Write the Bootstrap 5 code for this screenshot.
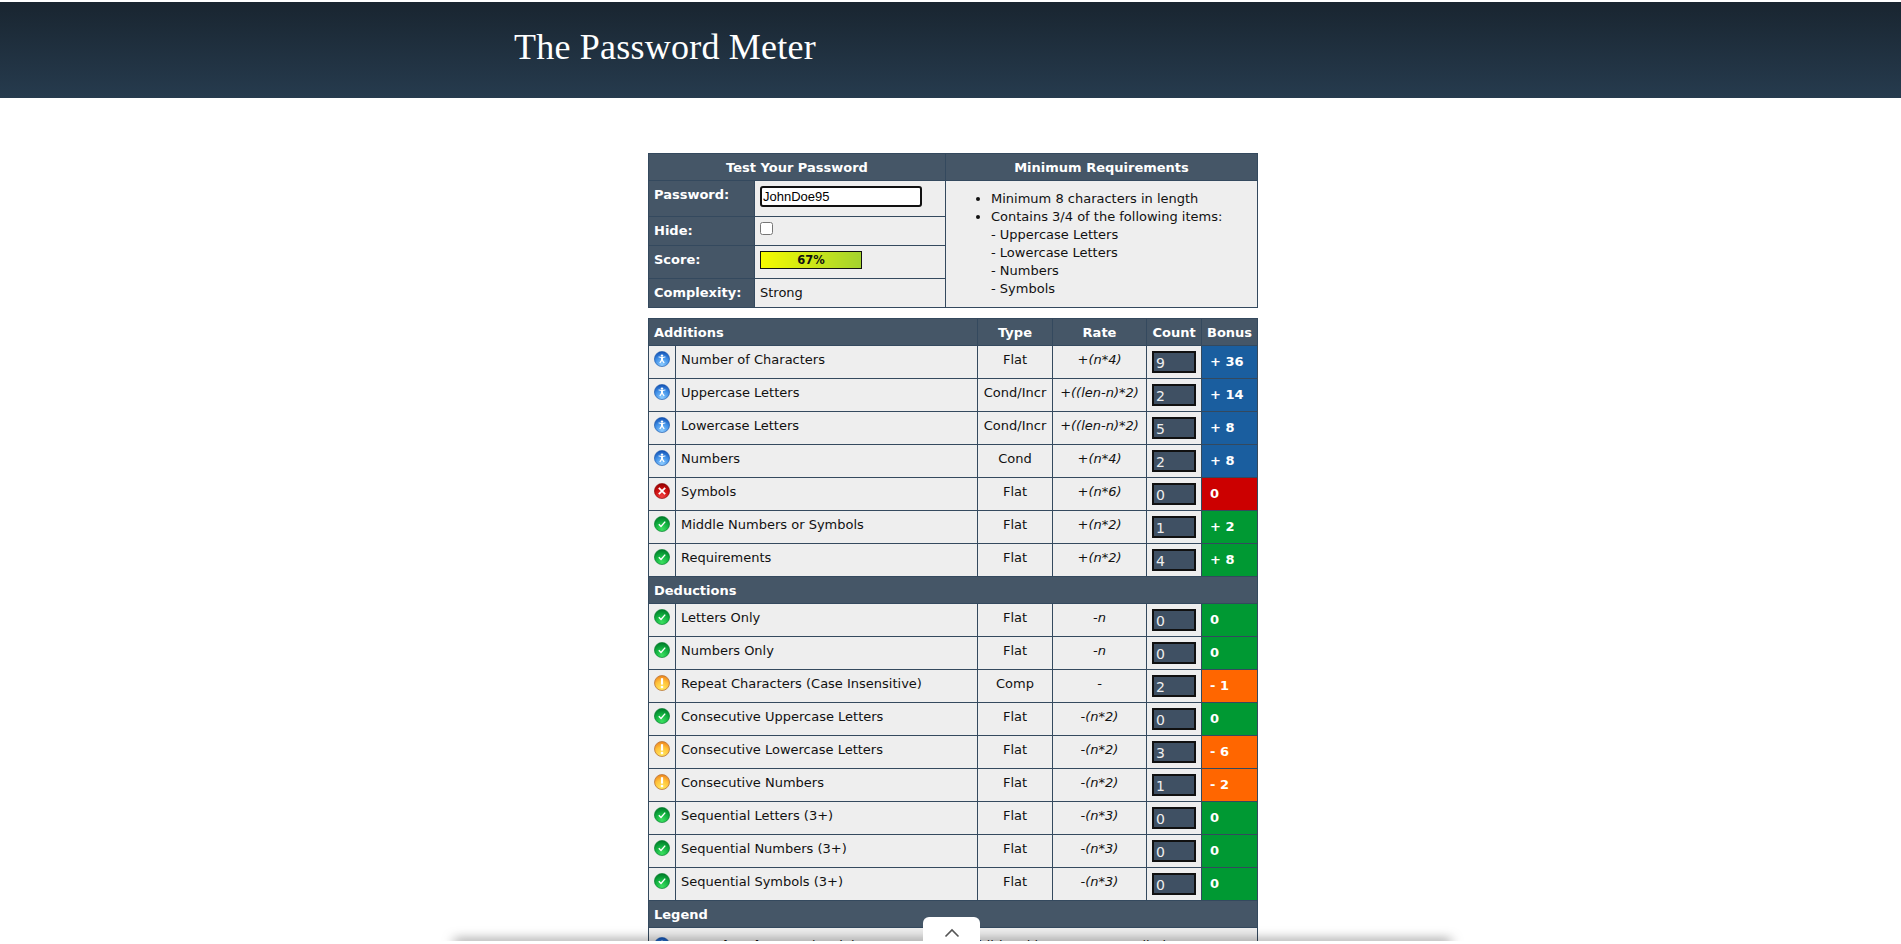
<!DOCTYPE html>
<html>
<head>
  <meta charset="UTF-8">
  <title>The Password Meter</title>
  <link href="https://cdn.jsdelivr.net/npm/bootstrap@5.3.2/dist/css/bootstrap.min.css" rel="stylesheet">
  <style>
    html, body { height: 944px; overflow: hidden; }
    body { background: #fff; font-family: "DejaVu Sans", Verdana, sans-serif; font-size: 13px; line-height: 18px; color: #111; }
    .site-head { margin-top: 2px; height: 96px; background: linear-gradient(#192530, #263b4e); padding: 24px 0 0 514px; }
    .site-head h1 { font-family: "Liberation Serif", serif; font-size: 36px; line-height: 42px; letter-spacing: .22px; color: #fff; margin: 0; font-weight: 400; }
    .meter-wrap { width: 610px; margin: 55px 0 0 648px; }
    .meter-tbl { width: 610px; table-layout: fixed; border-collapse: collapse; background: #eee; }
    .meter-tbl td, .meter-tbl th { border: 1px solid #34495e; padding: 0 5px; vertical-align: top; }
    .meter-tbl th, .meter-tbl td.lbl { background: #455667; color: #fff; font-weight: 700; }
    .meter-tbl thead th { height: 27px; padding-top: 5px; text-align: center; white-space: nowrap; }
    .meter-tbl thead th.first { text-align: left; }
    .top-tbl { margin-bottom: 10px; }
    .top-tbl .r1 td { height: 36px; padding-top: 5px; }
    .top-tbl .r2 td { height: 29px; padding-top: 5px; }
    .top-tbl .r3 td { height: 33px; padding-top: 5px; }
    .top-tbl .r4 td { height: 29px; padding-top: 5px; }
    .pass-input { width: 162px; height: 21px; border: 2px solid #111; border-radius: 3px; padding: 0 1px; font: 13px "Liberation Sans", Arial, sans-serif; background: #fff; color: #000; display: block; outline: none; }
    .hide-box { width: 13px; height: 13px; display: block; margin-top: 0; }
    .score-bar { width: 102px; height: 18px; border: 1px solid #111; background: linear-gradient(90deg, #f6fb00, #a4d32e); text-align: center; font-weight: 700; font-size: 11.5px; line-height: 16px; color: #111; }
    .req-cell { padding: 9px 5px 0 !important; }
    .req-cell ul { margin: 0; padding: 0 0 0 40px; }
    .req-cell .sub { list-style: none; }
    .rows { white-space: nowrap; }
    .rows td { height: 33px; padding-top: 5px; }
    .rows td.ico { padding: 5px 0 0 5px; }
    .rows td.ico svg { display: block; }
    .rows td.ctr { text-align: center; padding-left: 0; padding-right: 0; }
    .rows td.cnt { padding: 5px 5px 0; }
    .cnt-box { width: 44px; height: 22px; border: 2px solid #111; background: #3f5063; color: #eee; padding: 1px 0 0 2px; font-size: 14px; line-height: 18px; }
    .rows td.bonus { color: #fff; font-weight: 700; padding: 7px 0 0 8px; }
    .bg-blue { background: #1a5e9f; }
    .bg-grn { background: #009933; }
    .bg-red { background: #cc0000; }
    .bg-org { background: #ff6600; }
    .sub-head td { height: 27px !important; padding-top: 5px !important; }
    .legend-row td { padding-top: 9px; }
    .legend-row svg { vertical-align: top; margin-right: 4px; }
    .bottom-bar { position: absolute; left: 454px; width: 997px; top: 941px; height: 6px; box-shadow: 0 -1px 12px rgba(0,0,0,.55); }
    .bottom-fill { position: absolute; left: 0; right: 0; top: 941px; height: 3px; background: #fff; }
    .top-btn { position: absolute; left: 923px; top: 917px; width: 57px; height: 27px; background: #fff; border-radius: 6px 6px 0 0; }
    .top-btn svg { display: block; margin: 11px auto 0; }
  </style>
</head>
<body>
  <svg width="0" height="0" class="d-block">
    <defs>
      <radialGradient id="gb" cx=".5" cy=".85" r=".8"><stop offset="0" stop-color="#8ccbff"/><stop offset=".6" stop-color="#3f8fe6"/><stop offset="1" stop-color="#1555b8"/></radialGradient>
      <radialGradient id="gg" cx=".5" cy=".85" r=".8"><stop offset="0" stop-color="#3be060"/><stop offset=".6" stop-color="#10ad3e"/><stop offset="1" stop-color="#007f2a"/></radialGradient>
      <radialGradient id="gr" cx=".5" cy=".85" r=".8"><stop offset="0" stop-color="#f04040"/><stop offset=".6" stop-color="#cc1010"/><stop offset="1" stop-color="#980000"/></radialGradient>
      <radialGradient id="go" cx=".5" cy=".85" r=".8"><stop offset="0" stop-color="#ffe860"/><stop offset=".6" stop-color="#ffc23a"/><stop offset="1" stop-color="#f08a20"/></radialGradient>
      <symbol id="i-star" viewBox="0 0 16 16">
        <circle cx="8" cy="8" r="7.6" fill="url(#gb)" stroke="#1a55a8" stroke-width=".6"/>
        <circle cx="8" cy="4.6" r="1.2" fill="#fff"/>
        <path d="M4.4 6.3L7 7v2l-1.7 2.8 1 .5L8 10l1.7 2.3 1-.5L9 9V7l2.6-.7-.3-.9L8 6.1l-3.3-.7z" fill="#fff"/>
      </symbol>
      <symbol id="i-ok" viewBox="0 0 16 16">
        <circle cx="8" cy="8" r="7.6" fill="url(#gg)" stroke="#007a28" stroke-width=".6"/>
        <path d="M4.8 8.2l2.2 2.2 4.2-4.8" stroke="#fff" stroke-width="1.4" fill="none"/>
      </symbol>
      <symbol id="i-bad" viewBox="0 0 16 16">
        <circle cx="8" cy="8" r="7.6" fill="url(#gr)" stroke="#800" stroke-width=".6"/>
        <path d="M4.8 4.8l6.4 6.4M11.2 4.8l-6.4 6.4" stroke="#fff" stroke-width="1.8" fill="none"/>
      </symbol>
      <symbol id="i-warn" viewBox="0 0 16 16">
        <circle cx="8" cy="8" r="7.5" fill="url(#go)" stroke="#b8763a" stroke-width=".8"/>
        <path d="M8 3.2v6.4" stroke="#fff" stroke-width="2.2" fill="none"/>
        <circle cx="8" cy="12" r="1.3" fill="#fff"/>
      </symbol>
    </defs>
  </svg>

  <header class="site-head"><h1>The Password Meter</h1></header>

  <main class="meter-wrap">
    <table class="meter-tbl top-tbl">
      <colgroup><col style="width:106px"><col style="width:191px"><col></colgroup>
      <thead><tr><th colspan="2">Test Your Password</th><th>Minimum Requirements</th></tr></thead>
      <tbody>
        <tr class="r1">
          <td class="lbl">Password:</td>
          <td><input class="pass-input" type="text" value="JohnDoe95"></td>
          <td rowspan="4" class="req-cell">
            <ul>
              <li>Minimum 8 characters in length</li>
              <li>Contains 3/4 of the following items:</li>
              <li class="sub">- Uppercase Letters</li>
              <li class="sub">- Lowercase Letters</li>
              <li class="sub">- Numbers</li>
              <li class="sub">- Symbols</li>
            </ul>
          </td>
        </tr>
        <tr class="r2"><td class="lbl">Hide:</td><td><input class="hide-box" type="checkbox"></td></tr>
        <tr class="r3"><td class="lbl">Score:</td><td><div class="score-bar">67%</div></td></tr>
        <tr class="r4"><td class="lbl">Complexity:</td><td>Strong</td></tr>
      </tbody>
    </table>

    <table class="meter-tbl rows">
      <colgroup><col style="width:27px"><col style="width:302px"><col style="width:75px"><col style="width:94px"><col style="width:55px"><col></colgroup>
      <thead><tr><th colspan="2" class="first">Additions</th><th>Type</th><th>Rate</th><th>Count</th><th>Bonus</th></tr></thead>
      <tbody>
        <tr><td class="ico"><svg width="16" height="16"><use href="#i-star"/></svg></td><td>Number of Characters</td><td class="ctr">Flat</td><td class="ctr"><i>+(n*4)</i></td><td class="cnt"><div class="cnt-box">9</div></td><td class="bonus bg-blue">+ 36</td></tr>
        <tr><td class="ico"><svg width="16" height="16"><use href="#i-star"/></svg></td><td>Uppercase Letters</td><td class="ctr">Cond/Incr</td><td class="ctr"><i>+((len-n)*2)</i></td><td class="cnt"><div class="cnt-box">2</div></td><td class="bonus bg-blue">+ 14</td></tr>
        <tr><td class="ico"><svg width="16" height="16"><use href="#i-star"/></svg></td><td>Lowercase Letters</td><td class="ctr">Cond/Incr</td><td class="ctr"><i>+((len-n)*2)</i></td><td class="cnt"><div class="cnt-box">5</div></td><td class="bonus bg-blue">+ 8</td></tr>
        <tr><td class="ico"><svg width="16" height="16"><use href="#i-star"/></svg></td><td>Numbers</td><td class="ctr">Cond</td><td class="ctr"><i>+(n*4)</i></td><td class="cnt"><div class="cnt-box">2</div></td><td class="bonus bg-blue">+ 8</td></tr>
        <tr><td class="ico"><svg width="16" height="16"><use href="#i-bad"/></svg></td><td>Symbols</td><td class="ctr">Flat</td><td class="ctr"><i>+(n*6)</i></td><td class="cnt"><div class="cnt-box">0</div></td><td class="bonus bg-red">0</td></tr>
        <tr><td class="ico"><svg width="16" height="16"><use href="#i-ok"/></svg></td><td>Middle Numbers or Symbols</td><td class="ctr">Flat</td><td class="ctr"><i>+(n*2)</i></td><td class="cnt"><div class="cnt-box">1</div></td><td class="bonus bg-grn">+ 2</td></tr>
        <tr><td class="ico"><svg width="16" height="16"><use href="#i-ok"/></svg></td><td>Requirements</td><td class="ctr">Flat</td><td class="ctr"><i>+(n*2)</i></td><td class="cnt"><div class="cnt-box">4</div></td><td class="bonus bg-grn">+ 8</td></tr>
        <tr class="sub-head"><td colspan="6" class="lbl">Deductions</td></tr>
        <tr><td class="ico"><svg width="16" height="16"><use href="#i-ok"/></svg></td><td>Letters Only</td><td class="ctr">Flat</td><td class="ctr"><i>-n</i></td><td class="cnt"><div class="cnt-box">0</div></td><td class="bonus bg-grn">0</td></tr>
        <tr><td class="ico"><svg width="16" height="16"><use href="#i-ok"/></svg></td><td>Numbers Only</td><td class="ctr">Flat</td><td class="ctr"><i>-n</i></td><td class="cnt"><div class="cnt-box">0</div></td><td class="bonus bg-grn">0</td></tr>
        <tr><td class="ico"><svg width="16" height="16"><use href="#i-warn"/></svg></td><td>Repeat Characters (Case Insensitive)</td><td class="ctr">Comp</td><td class="ctr"><i>-</i></td><td class="cnt"><div class="cnt-box">2</div></td><td class="bonus bg-org">- 1</td></tr>
        <tr><td class="ico"><svg width="16" height="16"><use href="#i-ok"/></svg></td><td>Consecutive Uppercase Letters</td><td class="ctr">Flat</td><td class="ctr"><i>-(n*2)</i></td><td class="cnt"><div class="cnt-box">0</div></td><td class="bonus bg-grn">0</td></tr>
        <tr><td class="ico"><svg width="16" height="16"><use href="#i-warn"/></svg></td><td>Consecutive Lowercase Letters</td><td class="ctr">Flat</td><td class="ctr"><i>-(n*2)</i></td><td class="cnt"><div class="cnt-box">3</div></td><td class="bonus bg-org">- 6</td></tr>
        <tr><td class="ico"><svg width="16" height="16"><use href="#i-warn"/></svg></td><td>Consecutive Numbers</td><td class="ctr">Flat</td><td class="ctr"><i>-(n*2)</i></td><td class="cnt"><div class="cnt-box">1</div></td><td class="bonus bg-org">- 2</td></tr>
        <tr><td class="ico"><svg width="16" height="16"><use href="#i-ok"/></svg></td><td>Sequential Letters (3+)</td><td class="ctr">Flat</td><td class="ctr"><i>-(n*3)</i></td><td class="cnt"><div class="cnt-box">0</div></td><td class="bonus bg-grn">0</td></tr>
        <tr><td class="ico"><svg width="16" height="16"><use href="#i-ok"/></svg></td><td>Sequential Numbers (3+)</td><td class="ctr">Flat</td><td class="ctr"><i>-(n*3)</i></td><td class="cnt"><div class="cnt-box">0</div></td><td class="bonus bg-grn">0</td></tr>
        <tr><td class="ico"><svg width="16" height="16"><use href="#i-ok"/></svg></td><td>Sequential Symbols (3+)</td><td class="ctr">Flat</td><td class="ctr"><i>-(n*3)</i></td><td class="cnt"><div class="cnt-box">0</div></td><td class="bonus bg-grn">0</td></tr>
        <tr class="sub-head"><td colspan="6" class="lbl">Legend</td></tr>
        <tr class="legend-row"><td colspan="6"><svg width="16" height="16"><use href="#i-star"/></svg><b>Exceptional:</b> Exceeds minimum standards. Additional bonuses are applied.</td></tr>
      </tbody>
    </table>
  </main>

  <div class="bottom-bar"></div>
  <div class="bottom-fill"></div>
  <div class="top-btn"><svg width="16" height="10" viewBox="0 0 16 10"><path d="M1.5 8.5L8 2l6.5 6.5" stroke="#555" stroke-width="1.6" fill="none"/></svg></div>

  <script src="https://cdn.jsdelivr.net/npm/bootstrap@5.3.2/dist/js/bootstrap.bundle.min.js"></script>
</body>
</html>
